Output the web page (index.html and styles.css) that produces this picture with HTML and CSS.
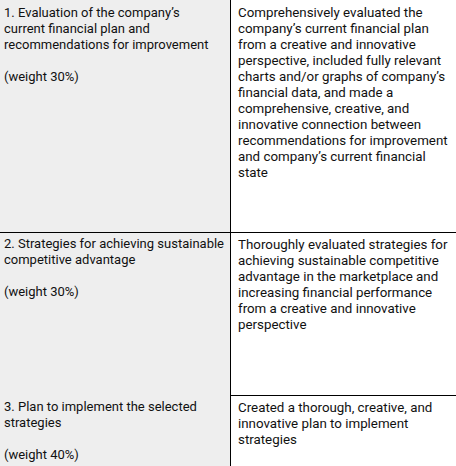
FILE: index.html
```html
<!DOCTYPE html>
<html>
<head>
<meta charset="utf-8">
<link rel="stylesheet" href="styles.css">
</head>
<body>
<div class="rubric">
  <div class="cell crit r1">
    <p>1. Evaluation of the company’s<br>current financial plan and<br>recommendations for improvement</p>
    <p class="weight">(weight 30%)</p>
  </div>
  <div class="cell desc r1">
    <p>Comprehensively evaluated the company’s current financial plan from a creative and innovative perspective, included fully relevant charts and/or graphs of company’s financial data, and made a comprehensive, creative, and innovative connection between recommendations for improvement and company’s current financial state</p>
  </div>
  <div class="cell crit r2">
    <p>2. Strategies for achieving sustainable<br>competitive advantage</p>
    <p class="weight">(weight 30%)</p>
  </div>
  <div class="cell desc r2">
    <p>Thoroughly evaluated strategies for achieving sustainable competitive advantage in the marketplace and increasing financial performance from a creative and innovative perspective</p>
  </div>
  <div class="cell crit r3">
    <p>3. Plan to implement the selected<br>strategies</p>
    <p class="weight">(weight 40%)</p>
  </div>
  <div class="cell desc r3">
    <p>Created a thorough, creative, and innovative plan to implement strategies</p>
  </div>
</div>
</body>
</html>
```
FILE: styles.css
```css
* { box-sizing: border-box; }
html, body {
  margin: 0;
  padding: 0;
  background: #ffffff;
}
body {
  width: 456px;
  height: 466px;
  overflow: hidden;
  font-family: Roboto, "Liberation Sans", sans-serif;
  font-size: 13.33px;
  line-height: 16px;
  color: #111111;
}
.rubric {
  display: grid;
  grid-template-columns: 230px 1fr;
  grid-template-rows: 233px 163px 1fr;
  height: 466px;
}
.cell p { margin: 0; }
.crit {
  background: #eeeeee;
  padding: 5px 0 0 4px;
  font-size: 13px;
  white-space: nowrap;
  overflow: hidden;
}
.desc {
  border-left: 1px solid #000;
  padding: 5px 4px 0 7px;
}
.r1 { border-bottom: 1px solid #000; }
.desc.r2 { border-bottom: 1px solid #000; }
.r2 { padding-top: 4px; }
.crit.r2 { padding-top: 3px; }
.crit.r3 { padding-top: 3px; }
.desc.r3 { padding-top: 4px; }
.weight { margin-top: 16px !important; }
```
